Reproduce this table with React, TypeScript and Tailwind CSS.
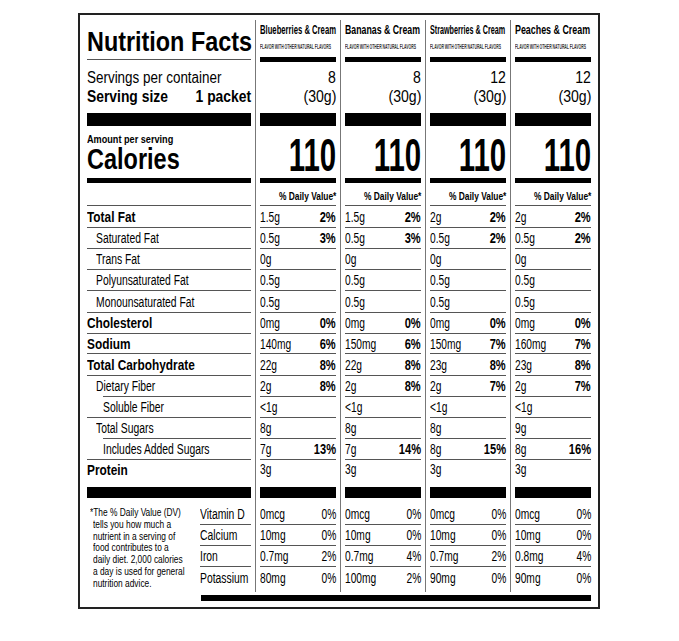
import React from 'react';

type Row = {
  label: string;
  bold?: boolean;
  indent?: 0 | 1 | 2;
  h: string;
  lineIndent?: boolean;
};

const rows: Row[] = [
  { label: 'Total Fat', bold: true, h: 'h-[22px]' },
  { label: 'Saturated Fat', indent: 1, h: 'h-[21px]' },
  { label: 'Trans Fat', indent: 1, h: 'h-[21px]' },
  { label: 'Polyunsaturated Fat', indent: 1, h: 'h-[21px]' },
  { label: 'Monounsaturated Fat', indent: 1, h: 'h-[22px]' },
  { label: 'Cholesterol', bold: true, h: 'h-[21px]' },
  { label: 'Sodium', bold: true, h: 'h-[20px]' },
  { label: 'Total Carbohydrate', bold: true, h: 'h-[22px]' },
  { label: 'Dietary Fiber', indent: 1, h: 'h-[21px]', lineIndent: true },
  { label: 'Soluble Fiber', indent: 2, h: 'h-[21px]' },
  { label: 'Total Sugars', indent: 1, h: 'h-[21px]', lineIndent: true },
  { label: 'Includes Added Sugars', indent: 2, h: 'h-[21px]' },
];

const vitamins = ['Vitamin D', 'Calcium', 'Iron', 'Potassium'];

const footnote = [
  '*The % Daily Value (DV)',
  'tells you how much a',
  'nutrient in a serving of',
  'food contributes to a',
  'daily diet. 2,000 calories',
  'a day is used for general',
  'nutrition advice.',
];

type Flavor = {
  name: string;
  fit: string;
  servings: string;
  values: [string, string][];
  protein: string;
  vitamins: [string, string][];
};

const flavors: Flavor[] = [
  {
    name: 'Blueberries & Cream',
    fit: 'scale-x-[0.64]',
    servings: '8',
    values: [
      ['1.5g', '2%'], ['0.5g', '3%'], ['0g', ''], ['0.5g', ''], ['0.5g', ''], ['0mg', '0%'],
      ['140mg', '6%'], ['22g', '8%'], ['2g', '8%'], ['<1g', ''], ['8g', ''], ['7g', '13%'],
    ],
    protein: '3g',
    vitamins: [['0mcg', '0%'], ['10mg', '0%'], ['0.7mg', '2%'], ['80mg', '0%']],
  },
  {
    name: 'Bananas & Cream',
    fit: 'scale-x-[0.73]',
    servings: '8',
    values: [
      ['1.5g', '2%'], ['0.5g', '3%'], ['0g', ''], ['0.5g', ''], ['0.5g', ''], ['0mg', '0%'],
      ['150mg', '6%'], ['22g', '8%'], ['2g', '8%'], ['<1g', ''], ['8g', ''], ['7g', '14%'],
    ],
    protein: '3g',
    vitamins: [['0mcg', '0%'], ['10mg', '0%'], ['0.7mg', '4%'], ['100mg', '2%']],
  },
  {
    name: 'Strawberries & Cream',
    fit: 'scale-x-[0.6]',
    servings: '12',
    values: [
      ['2g', '2%'], ['0.5g', '2%'], ['0g', ''], ['0.5g', ''], ['0.5g', ''], ['0mg', '0%'],
      ['150mg', '7%'], ['23g', '8%'], ['2g', '7%'], ['<1g', ''], ['8g', ''], ['8g', '15%'],
    ],
    protein: '3g',
    vitamins: [['0mcg', '0%'], ['10mg', '0%'], ['0.7mg', '2%'], ['90mg', '0%']],
  },
  {
    name: 'Peaches & Cream',
    fit: 'scale-x-[0.74]',
    servings: '12',
    values: [
      ['2g', '2%'], ['0.5g', '2%'], ['0g', ''], ['0.5g', ''], ['0.5g', ''], ['0mg', '0%'],
      ['160mg', '7%'], ['23g', '8%'], ['2g', '7%'], ['<1g', ''], ['9g', ''], ['8g', '16%'],
    ],
    protein: '3g',
    vitamins: [['0mcg', '0%'], ['10mg', '0%'], ['0.8mg', '4%'], ['90mg', '0%']],
  },
];

// the label is set in a condensed face; squeeze Liberation Sans to match
function Sq({
  s,
  right,
  className = '',
  children,
}: {
  s: string;
  right?: boolean;
  className?: string;
  children: React.ReactNode;
}) {
  return (
    <span className={`inline-block whitespace-nowrap ${right ? 'origin-right' : 'origin-left'} ${s} ${className}`}>
      {children}
    </span>
  );
}

const Rule = ({ className = '' }: { className?: string }) => (
  <div className={`h-px shrink-0 bg-[#555] ${className}`} />
);

function LabelColumn() {
  return (
    <div className="flex w-[164px] flex-col">
      <div className="flex h-[39px] items-end pb-[3px]">
        <h1 className="text-[28px] font-bold leading-[28px]">
          <Sq s="scale-x-[0.835]">Nutrition Facts</Sq>
        </h1>
      </div>
      <Rule />
      <div className="h-[53px] pt-[8px] text-[16px] leading-[19px]">
        <div>
          <Sq s="scale-x-[0.84]">Servings per container</Sq>
        </div>
        <div className="flex justify-between text-[16.5px] font-bold">
          <Sq s="scale-x-[0.84]">Serving size</Sq>
          <Sq s="scale-x-[0.84]" right>
            1 packet
          </Sq>
        </div>
      </div>
      <div className="h-[13px] bg-black" />
      <div className="h-[52px] pt-[7px]">
        <div className="text-[11px] font-bold leading-[12px]">
          <Sq s="scale-x-[0.83]">Amount per serving</Sq>
        </div>
        <div className="text-[29px] font-bold leading-[29px]">
          <Sq s="scale-x-[0.81]">Calories</Sq>
        </div>
      </div>
      <div className="h-[5px] bg-black" />
      <div className="h-[22px]" />
      <Rule />
      {rows.map((r) => (
        <div key={r.label} className={`flex flex-col ${r.h}`}>
          <div
            className={`flex min-h-0 flex-1 items-center leading-[16px] ${
              r.indent === 1 ? 'pl-[9px]' : r.indent === 2 ? 'pl-[16px]' : ''
            } ${r.bold ? 'text-[15px] font-bold' : 'text-[14px]'}`}
          >
            <Sq s={r.bold ? 'scale-x-[0.79]' : 'scale-x-[0.74]'}>{r.label}</Sq>
          </div>
          <Rule className={r.lineIndent ? 'ml-[16px]' : ''} />
        </div>
      ))}
      <div className="h-[27px] text-[15px] font-bold leading-[19px]">
        <Sq s="scale-x-[0.79]">Protein</Sq>
      </div>
      <div className="h-[11px] bg-black" />
      <div className="flex h-[94px]">
        <div className="w-[108px] pt-[9px] text-[11px] leading-[11.8px]">
          {footnote.map((line, i) => (
            <div key={i} className={i === 0 ? 'pl-[3px]' : 'pl-[6px]'}>
              <Sq s="scale-x-[0.76]">{line}</Sq>
            </div>
          ))}
        </div>
        <div className="ml-auto w-[51px] pt-[6px]">
          {vitamins.map((v, i) => (
            <div key={v} className="flex h-[21px] flex-col">
              <div className="flex min-h-0 flex-1 items-center text-[14px] leading-[16px]">
                <Sq s="scale-x-[0.74]">{v}</Sq>
              </div>
              {i < 3 && <Rule />}
            </div>
          ))}
        </div>
      </div>
    </div>
  );
}

function FlavorColumn({ f }: { f: Flavor }) {
  return (
    <div className="ml-[4px] flex w-[81px] flex-col border-l border-[#777] pl-[4px]">
      <div className="h-[37px] pt-[3px]">
        <div className="text-[12px] font-bold leading-[14px]">
          <Sq s={f.fit}>{f.name}</Sq>
        </div>
        <div className="mt-[5px] text-[8px] font-bold leading-[9px] text-[#333]">
          <Sq s="scale-x-[0.43]">FLAVOR WITH OTHER NATURAL FLAVORS</Sq>
        </div>
      </div>
      <div className="h-[5px] bg-black" />
      <div className="h-[51px] pt-[6px] text-right text-[16px] leading-[19px]">
        <div>
          <Sq s="scale-x-[0.88]" right>
            {f.servings}
          </Sq>
        </div>
        <div>
          <Sq s="scale-x-[0.88]" right>
            (30g)
          </Sq>
        </div>
      </div>
      <div className="h-[13px] bg-black" />
      <div className="flex h-[52px] items-end justify-end text-[46px] font-bold leading-[46px]">
        <Sq s="scale-x-[0.64]" right>
          110
        </Sq>
      </div>
      <div className="h-[5px] bg-black" />
      <div className="flex h-[22px] items-end justify-end pb-[2px] text-[10px] font-bold leading-[12px]">
        <Sq s="scale-x-[0.84]" right>
          % Daily Value*
        </Sq>
      </div>
      <Rule />
      {rows.map((r, i) => (
        <div key={r.label} className={`flex flex-col ${r.h}`}>
          <div className="flex min-h-0 flex-1 items-center justify-between leading-[16px]">
            <Sq s="scale-x-[0.73]" className="text-[14px]">
              {f.values[i][0]}
            </Sq>
            <Sq s="scale-x-[0.74]" right className="text-[15px] font-bold">
              {f.values[i][1]}
            </Sq>
          </div>
          <Rule />
        </div>
      ))}
      <div className="h-[27px] text-[14px] leading-[19px]">
        <Sq s="scale-x-[0.73]">{f.protein}</Sq>
      </div>
      <div className="h-[11px] bg-black" />
      <div className="h-[94px] pt-[6px]">
        {f.vitamins.map(([amt, pct], i) => (
          <div key={i} className="flex h-[21px] flex-col">
            <div className="flex min-h-0 flex-1 items-center justify-between text-[14px] leading-[16px]">
              <Sq s="scale-x-[0.73]">{amt}</Sq>
              <Sq s="scale-x-[0.73]" right>
                {pct}
              </Sq>
            </div>
            {i < 3 && <Rule />}
          </div>
        ))}
      </div>
    </div>
  );
}

export default function App() {
  return (
    <div className="min-h-screen bg-white pt-[13px] pl-[78px] font-['Liberation_Sans',Arial,sans-serif] text-black">
      <div className="w-[522px] border-2 border-[#222] px-[7px] pt-[5px] pb-[6px]">
        <div className="flex">
          <LabelColumn />
          {flavors.map((f) => (
            <FlavorColumn key={f.name} f={f} />
          ))}
        </div>
        <div className="mt-[3px] ml-[114px] h-[6px] bg-black" />
      </div>
    </div>
  );
}
